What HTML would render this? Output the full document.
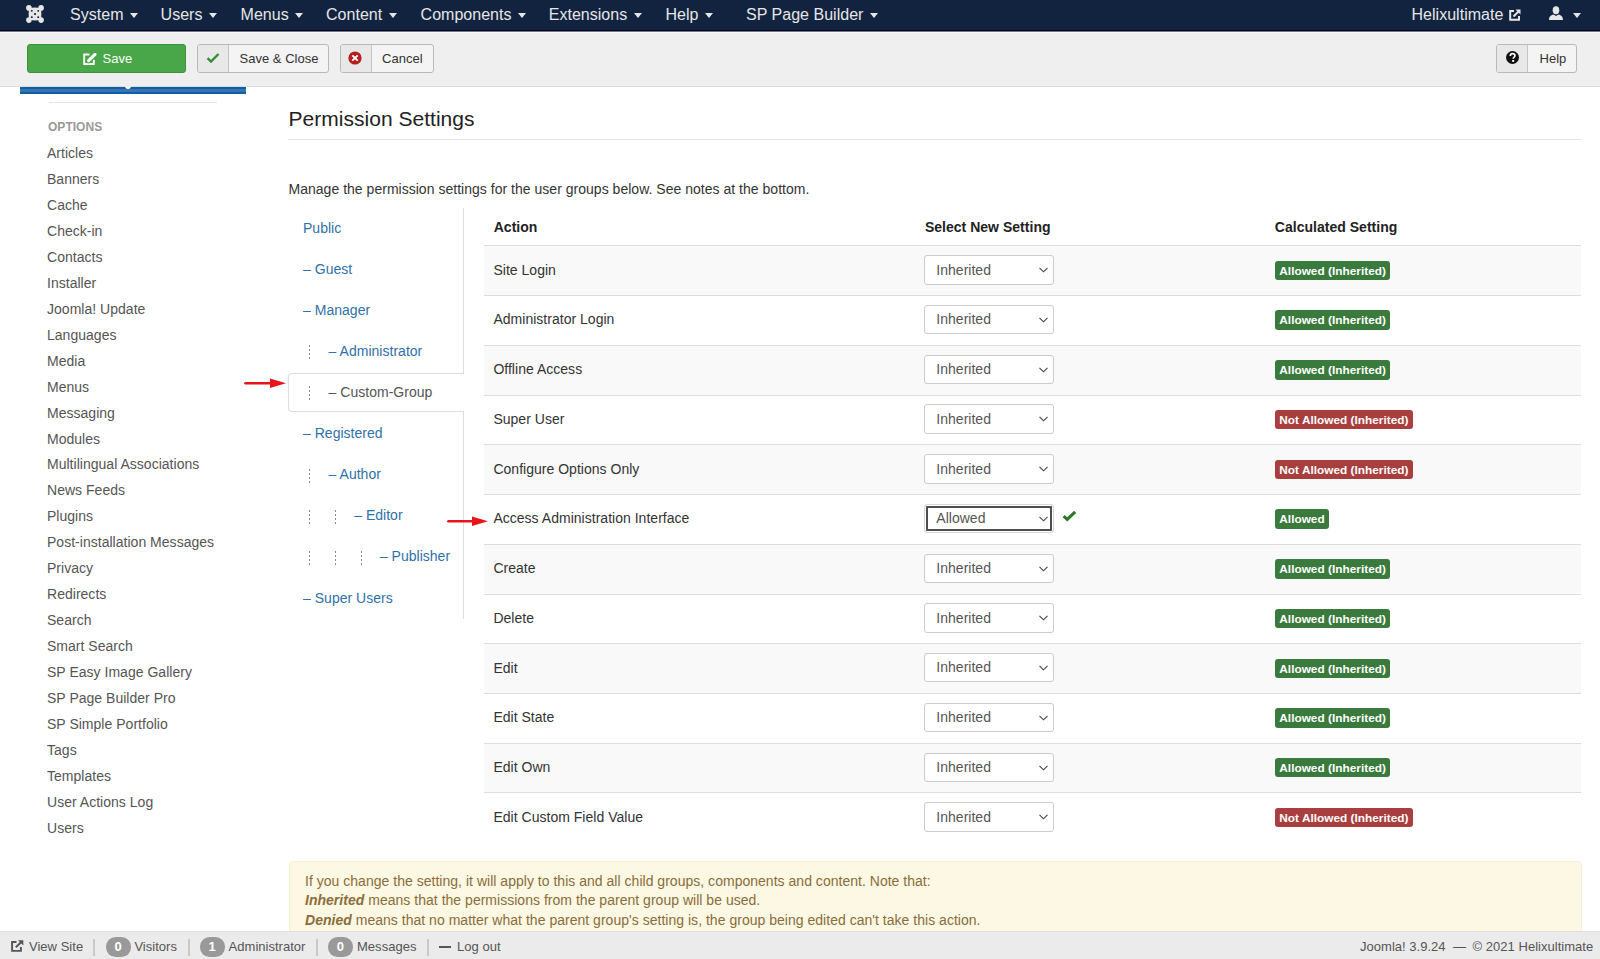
<!DOCTYPE html>
<html><head><meta charset="utf-8">
<style>
*{box-sizing:border-box}
html,body{margin:0;padding:0;width:1600px;height:959px;overflow:hidden;background:#fff;font-family:"Liberation Sans",sans-serif;color:#333;letter-spacing:0.022px}
.a{position:absolute;white-space:nowrap}
#nav{position:absolute;left:0;top:0;width:1600px;height:31px;background:#12233f;border-bottom:1px solid #00022c}
#nav .i{position:absolute;top:-0.54px;line-height:31px;font-size:16px;color:#e6e6e6}
.caret{display:inline-block;width:0;height:0;border-top:5.5px solid #e6e6e6;border-left:4.5px solid transparent;border-right:4.5px solid transparent;vertical-align:middle;margin-left:6.6px;position:relative;top:-1px}
#tb{position:absolute;left:0;top:31px;width:1600px;height:56px;background:#efefef;border-top:1px solid #787878;box-shadow:inset 0 1px 0 #fafafa;border-bottom:1px solid #dcdcdc}
.btn{position:absolute;top:44px;height:29px;border:1px solid #b9b9b9;border-radius:3px;background:#f4f4f4;font-size:13px;color:#333;overflow:hidden}
.btn .ic{position:absolute;left:0;top:0;bottom:0;background:#e8e8e8;border-right:1px solid #c4c4c4}
.btn .tx{position:absolute;top:3.8px;line-height:20px}
#side .it{position:absolute;left:47px;font-size:14px;line-height:26px;color:#555}
.tab{position:absolute;font-size:14px;line-height:20px;color:#3071a9}
.dash{position:absolute;width:1px;height:14px;background:repeating-linear-gradient(#8a8a8a 0 2px,transparent 2px 3.9px)}
.row{position:absolute;left:484px;width:1097px;height:49.73px;border-top:1px solid #ddd}
.row.s{background:#f9f9f9}
.row .an{position:absolute;left:9.4px;top:13.35px;font-size:14px;line-height:20px;color:#333;white-space:nowrap}
.sel{position:absolute;left:440.3px;top:8.9px;width:129.4px;height:29.3px;border:1px solid #ccc;border-radius:3px;background:#fff;font-size:14px;color:#555}
.sel.f{border-color:#d8d8d8;box-shadow:inset 0 0 0 1px #fff,inset 0 0 0 3px #4e4e4e}
.sel span{position:absolute;left:11px;top:3.3px;line-height:20px}
.sel svg{position:absolute;left:114px;top:11px}
.bdg{position:absolute;left:790.8px;top:14.3px;height:19.5px;border-radius:3px;font-size:11.8px;font-weight:bold;color:#fff;line-height:20.6px;padding:0 4.5px;white-space:nowrap}
.g{background:#3b7a3d}
.r{background:#a93e3e}
#foot{position:absolute;left:0;top:931px;width:1600px;height:28px;background:#ebebeb;border-top:1px solid #dedede;font-size:13px;color:#555}
#foot .a{top:5.1px;line-height:20px}
.fb{position:absolute;top:5.2px;height:19.5px;width:25px;border-radius:9.75px;background:#999;color:#fff;font-weight:bold;text-align:center;line-height:19.5px;font-size:13px}
.sep{position:absolute;top:7.25px;height:16.3px;width:1.6px;background:#c9c9c9}
</style></head><body>

<div id="nav">
  <svg class="a" style="left:26px;top:5px" width="18" height="18" viewBox="0 0 18 18">
    <path d="M3 3L9 2.6L15 3L15.4 9L15 15L9 15.4L3 15L2.6 9Z" fill="#e6e6e6"/>
    <g fill="#e6e6e6"><circle cx="2.9" cy="2.9" r="2.8"/><circle cx="15.1" cy="2.9" r="2.8"/><circle cx="2.9" cy="15.1" r="2.8"/><circle cx="15.1" cy="15.1" r="2.8"/></g>
    <g fill="#12233f"><ellipse cx="5.8" cy="5.8" rx="1" ry="0.9"/><ellipse cx="12.2" cy="5.8" rx="1" ry="0.9"/><ellipse cx="9" cy="9" rx="1.1" ry="1"/><ellipse cx="5.8" cy="12.2" rx="1" ry="0.9"/><ellipse cx="12.2" cy="12.2" rx="1" ry="0.9"/>
    <path d="M7.5 0.5Q9 1.8 10.5 0.5Z M7.5 17.5Q9 16.2 10.5 17.5Z M0.5 7.5Q1.8 9 0.5 10.5Z M17.5 7.5Q16.2 9 17.5 10.5Z"/></g>
  </svg>
  <div class="i" style="left:70px">System<span class="caret"></span></div>
  <div class="i" style="left:160.6px">Users<span class="caret"></span></div>
  <div class="i" style="left:240.6px">Menus<span class="caret"></span></div>
  <div class="i" style="left:326px">Content<span class="caret"></span></div>
  <div class="i" style="left:420.6px">Components<span class="caret"></span></div>
  <div class="i" style="left:548.75px">Extensions<span class="caret"></span></div>
  <div class="i" style="left:665.5px">Help<span class="caret"></span></div>
  <div class="i" style="left:746px">SP Page Builder<span class="caret"></span></div>
  <div class="i" style="left:1411.5px">Helixultimate</div>
  <svg class="a" style="left:1508.5px;top:8.5px" width="12" height="12" viewBox="0 0 12 12">
    <path d="M5 2H1.2V10.8H10V7" fill="none" stroke="#e6e6e6" stroke-width="2"/>
    <path d="M6.5 0.5H11.5V5.5Z" fill="#e6e6e6"/><path d="M4.5 7.5L10 2" stroke="#e6e6e6" stroke-width="2"/>
  </svg>
  <svg class="a" style="left:1548.5px;top:6px" width="14" height="14" viewBox="0 0 14 14">
    <ellipse cx="7" cy="4.2" rx="3.3" ry="4" fill="#e6e6e6"/>
    <path d="M0 14C0 10.5 2 9.3 4.5 8.6L7 10L9.5 8.6C12 9.3 14 10.5 14 14Z" fill="#e6e6e6"/>
  </svg>
  <div class="a" style="left:1573px;top:12.8px;width:0;height:0;border-top:5.5px solid #e6e6e6;border-left:4.25px solid transparent;border-right:4.25px solid transparent"></div>
</div>

<div id="tb">
</div>
<div class="btn" style="left:27px;width:159px;background:#49a749;border-color:#3a933a">
  <svg class="a" style="left:54.5px;top:7.5px" width="15" height="14" viewBox="0 0 15 14">
    <path d="M6.5 1.5H1.2V11H10.8V6.8" fill="none" stroke="#fff" stroke-width="1.9"/>
    <path d="M5.6 7.6L12 1.4" stroke="#49a749" stroke-width="5.4" stroke-linecap="round"/>
    <path d="M5.6 7.6L12 1.4" stroke="#fff" stroke-width="3" stroke-linecap="round"/>
  </svg>
  <span class="tx" style="left:74.5px;color:#fff">Save</span>
</div>
<div class="btn" style="left:196.5px;width:132.5px">
  <div class="ic" style="width:31px"></div>
  <svg class="a" style="left:8px;top:7px" width="14" height="12" viewBox="0 0 14 12">
    <path d="M1.5 6.2L5 9.5L12.5 2" fill="none" stroke="#378b37" stroke-width="2.4"/>
  </svg>
  <span class="tx" style="left:42px">Save &amp; Close</span>
</div>
<div class="btn" style="left:339.5px;width:94px">
  <div class="ic" style="width:31px"></div>
  <svg class="a" style="left:7.8px;top:6px" width="14" height="14" viewBox="0 0 14 14">
    <circle cx="7" cy="7" r="6.6" fill="#b41f1f"/>
    <path d="M4.3 4.3L9.7 9.7M9.7 4.3L4.3 9.7" stroke="#fff" stroke-width="1.9"/>
  </svg>
  <span class="tx" style="left:41.5px">Cancel</span>
</div>
<div class="btn" style="left:1496px;width:81px">
  <div class="ic" style="width:31px"></div>
  <svg class="a" style="left:8.5px;top:6.3px" width="13" height="13" viewBox="0 0 13 13">
    <circle cx="6.5" cy="6.5" r="6.5" fill="#111"/>
    <path d="M4.3 5C4.3 3.5 5.3 2.7 6.6 2.7C8 2.7 8.9 3.5 8.9 4.7C8.9 6.2 7.2 6.3 7.2 7.8" fill="none" stroke="#fff" stroke-width="1.7"/>
    <rect x="6.2" y="9" width="1.9" height="1.9" fill="#fff"/>
  </svg>
  <span class="tx" style="left:42.5px">Help</span>
</div>

<!-- sidebar -->
<div id="side">
  <div class="a" style="left:20px;top:87px;width:226px;height:6.5px;background:linear-gradient(#0d5fa6 0,#0d5fa6 1.6px,#3874ae 1.6px,#3874ae 4.8px,#0d5fa6 4.8px)"></div>
  <div class="a" style="left:125.2px;top:86px;width:5.6px;height:3.2px;background:#fff;border-radius:0 0 3px 3px"></div>
  <div class="a" style="left:49px;top:102px;width:168px;height:1px;background:#e5e5e5"></div>
  <div class="a" style="left:48px;top:118.74px;font-size:12px;line-height:16px;font-weight:bold;color:#999">OPTIONS</div>
  <div class="it" style="top:140.18px">Articles</div>
  <div class="it" style="top:166.12px">Banners</div>
  <div class="it" style="top:192.06px">Cache</div>
  <div class="it" style="top:218px">Check-in</div>
  <div class="it" style="top:243.94px">Contacts</div>
  <div class="it" style="top:269.88px">Installer</div>
  <div class="it" style="top:295.82px">Joomla! Update</div>
  <div class="it" style="top:321.76px">Languages</div>
  <div class="it" style="top:347.7px">Media</div>
  <div class="it" style="top:373.64px">Menus</div>
  <div class="it" style="top:399.58px">Messaging</div>
  <div class="it" style="top:425.52px">Modules</div>
  <div class="it" style="top:451.46px">Multilingual Associations</div>
  <div class="it" style="top:477.4px">News Feeds</div>
  <div class="it" style="top:503.34px">Plugins</div>
  <div class="it" style="top:529.28px">Post-installation Messages</div>
  <div class="it" style="top:555.22px">Privacy</div>
  <div class="it" style="top:581.16px">Redirects</div>
  <div class="it" style="top:607.1px">Search</div>
  <div class="it" style="top:633.04px">Smart Search</div>
  <div class="it" style="top:658.98px">SP Easy Image Gallery</div>
  <div class="it" style="top:684.92px">SP Page Builder Pro</div>
  <div class="it" style="top:710.86px">SP Simple Portfolio</div>
  <div class="it" style="top:736.8px">Tags</div>
  <div class="it" style="top:762.74px">Templates</div>
  <div class="it" style="top:788.68px">User Actions Log</div>
  <div class="it" style="top:814.62px">Users</div>
</div>

<!-- main -->
<div class="a" style="left:288.5px;top:106.82px;font-size:21px;line-height:24px;color:#222">Permission Settings</div>
<div class="a" style="left:288px;top:139px;width:1293px;height:1px;background:#e5e5e5"></div>
<div class="a" style="left:288.5px;top:178.65px;font-size:14px;line-height:20px;color:#333">Manage the permission settings for the user groups below. See notes at the bottom.</div>


<!-- tabs -->
<div class="a" style="left:463px;top:208.4px;width:1px;height:164.6px;background:#ddd"></div>
<div class="a" style="left:463px;top:411px;width:1px;height:208px;background:#ddd"></div>
<div class="a" style="left:288.3px;top:373px;width:176px;height:38.5px;border:1px solid #ddd;border-right:0;border-radius:4px 0 0 4px;background:#fff"></div>
<div class="tab" style="left:303.0px;top:217.65px">Public</div>
<div class="tab" style="left:303.0px;top:258.75px">&ndash; Guest</div>
<div class="tab" style="left:303.0px;top:299.85px">&ndash; Manager</div>
<div class="tab" style="left:328.6px;top:340.95px">&ndash; Administrator</div>
<div class="dash" style="left:309.3px;top:345.3px"></div>
<div class="tab" style="left:328.6px;top:382.05px;color:#555">&ndash; Custom-Group</div>
<div class="dash" style="left:309.3px;top:386.4px"></div>
<div class="tab" style="left:303.0px;top:423.15px">&ndash; Registered</div>
<div class="tab" style="left:328.6px;top:464.25px">&ndash; Author</div>
<div class="dash" style="left:309.3px;top:468.6px"></div>
<div class="tab" style="left:354.2px;top:505.35px">&ndash; Editor</div>
<div class="dash" style="left:309.3px;top:509.7px"></div>
<div class="dash" style="left:334.9px;top:509.7px"></div>
<div class="tab" style="left:379.8px;top:546.45px">&ndash; Publisher</div>
<div class="dash" style="left:309.3px;top:550.8px"></div>
<div class="dash" style="left:334.9px;top:550.8px"></div>
<div class="dash" style="left:360.5px;top:550.8px"></div>
<div class="tab" style="left:303.0px;top:587.55px">&ndash; Super Users</div>
<!-- arrows -->
<svg class="a" style="left:244px;top:376px" width="44" height="14" viewBox="0 0 44 14">
  <path d="M1.5 7.2L30 7.2" stroke="#e8141b" stroke-width="2.6" stroke-linecap="round"/>
  <path d="M26 2.5L42 7.2L26 12Z" fill="#e8141b"/>
</svg>
<svg class="a" style="left:447px;top:514px" width="44" height="14" viewBox="0 0 44 14">
  <path d="M1.5 7.2L30 7.2" stroke="#e8141b" stroke-width="2.6" stroke-linecap="round"/>
  <path d="M25 2.5L41 7.2L25 12Z" fill="#e8141b"/>
</svg>
<!-- table -->
<div class="a" style="left:493.7px;top:217.1px;font-size:14px;line-height:20px;font-weight:bold;color:#222">Action</div>
<div class="a" style="left:924.9px;top:217.1px;font-size:14px;line-height:20px;font-weight:bold;color:#222">Select New Setting</div>
<div class="a" style="left:1274.8px;top:217.1px;font-size:14px;line-height:20px;font-weight:bold;color:#222">Calculated Setting</div>
<div class="row s" style="top:245.40px"><span class="an">Site Login</span><div class="sel"><span>Inherited</span><svg width="9" height="6" viewBox="0 0 9 6"><path d="M0.5 0.8L4.5 4.8L8.5 0.8" fill="none" stroke="#444" stroke-width="1.1"/></svg></div><span class="bdg g">Allowed (Inherited)</span></div>
<div class="row" style="top:295.13px"><span class="an">Administrator Login</span><div class="sel"><span>Inherited</span><svg width="9" height="6" viewBox="0 0 9 6"><path d="M0.5 0.8L4.5 4.8L8.5 0.8" fill="none" stroke="#444" stroke-width="1.1"/></svg></div><span class="bdg g">Allowed (Inherited)</span></div>
<div class="row s" style="top:344.86px"><span class="an">Offline Access</span><div class="sel"><span>Inherited</span><svg width="9" height="6" viewBox="0 0 9 6"><path d="M0.5 0.8L4.5 4.8L8.5 0.8" fill="none" stroke="#444" stroke-width="1.1"/></svg></div><span class="bdg g">Allowed (Inherited)</span></div>
<div class="row" style="top:394.59px"><span class="an">Super User</span><div class="sel"><span>Inherited</span><svg width="9" height="6" viewBox="0 0 9 6"><path d="M0.5 0.8L4.5 4.8L8.5 0.8" fill="none" stroke="#444" stroke-width="1.1"/></svg></div><span class="bdg r">Not Allowed (Inherited)</span></div>
<div class="row s" style="top:444.32px"><span class="an">Configure Options Only</span><div class="sel"><span>Inherited</span><svg width="9" height="6" viewBox="0 0 9 6"><path d="M0.5 0.8L4.5 4.8L8.5 0.8" fill="none" stroke="#444" stroke-width="1.1"/></svg></div><span class="bdg r">Not Allowed (Inherited)</span></div>
<div class="row" style="top:494.05px"><span class="an">Access Administration Interface</span><div class="sel f"><span>Allowed</span><svg width="9" height="6" viewBox="0 0 9 6"><path d="M0.5 0.8L4.5 4.8L8.5 0.8" fill="none" stroke="#444" stroke-width="1.1"/></svg></div><svg class="a" style="left:577.5px;top:15px" width="15" height="12" viewBox="0 0 15 12"><path d="M1.6 6.2L5.2 9.4L13.2 1.8" fill="none" stroke="#2a7a2a" stroke-width="3"/></svg><span class="bdg g">Allowed</span></div>
<div class="row s" style="top:543.78px"><span class="an">Create</span><div class="sel"><span>Inherited</span><svg width="9" height="6" viewBox="0 0 9 6"><path d="M0.5 0.8L4.5 4.8L8.5 0.8" fill="none" stroke="#444" stroke-width="1.1"/></svg></div><span class="bdg g">Allowed (Inherited)</span></div>
<div class="row" style="top:593.51px"><span class="an">Delete</span><div class="sel"><span>Inherited</span><svg width="9" height="6" viewBox="0 0 9 6"><path d="M0.5 0.8L4.5 4.8L8.5 0.8" fill="none" stroke="#444" stroke-width="1.1"/></svg></div><span class="bdg g">Allowed (Inherited)</span></div>
<div class="row s" style="top:643.24px"><span class="an">Edit</span><div class="sel"><span>Inherited</span><svg width="9" height="6" viewBox="0 0 9 6"><path d="M0.5 0.8L4.5 4.8L8.5 0.8" fill="none" stroke="#444" stroke-width="1.1"/></svg></div><span class="bdg g">Allowed (Inherited)</span></div>
<div class="row" style="top:692.97px"><span class="an">Edit State</span><div class="sel"><span>Inherited</span><svg width="9" height="6" viewBox="0 0 9 6"><path d="M0.5 0.8L4.5 4.8L8.5 0.8" fill="none" stroke="#444" stroke-width="1.1"/></svg></div><span class="bdg g">Allowed (Inherited)</span></div>
<div class="row s" style="top:742.70px"><span class="an">Edit Own</span><div class="sel"><span>Inherited</span><svg width="9" height="6" viewBox="0 0 9 6"><path d="M0.5 0.8L4.5 4.8L8.5 0.8" fill="none" stroke="#444" stroke-width="1.1"/></svg></div><span class="bdg g">Allowed (Inherited)</span></div>
<div class="row" style="top:792.43px"><span class="an">Edit Custom Field Value</span><div class="sel"><span>Inherited</span><svg width="9" height="6" viewBox="0 0 9 6"><path d="M0.5 0.8L4.5 4.8L8.5 0.8" fill="none" stroke="#444" stroke-width="1.1"/></svg></div><span class="bdg r">Not Allowed (Inherited)</span></div>
<!-- alert -->
<div class="a" style="left:288.5px;top:861.3px;width:1293px;height:120px;background:#fcf8e3;border:1px solid #fbeed5;border-radius:4px;font-size:14px;color:#8a6d3b">
  <div class="a" style="left:15.5px;top:9.8px;line-height:19.2px">If you change the setting, it will apply to this and all child groups, components and content. Note that:<br><b><i>Inherited</i></b> means that the permissions from the parent group will be used.<br><b><i>Denied</i></b> means that no matter what the parent group's setting is, the group being edited can't take this action.</div>
</div>
<!-- footer -->
<div id="foot">
  <svg class="a" style="left:10.8px;top:7.6px" width="13" height="12" viewBox="0 0 13 12">
    <path d="M5.5 2H1.1V10.9H9.9V7" fill="none" stroke="#555" stroke-width="1.9"/>
    <path d="M7 0.3H12.3V5.6Z" fill="#555"/><path d="M4.8 7.3L10.6 1.8" stroke="#555" stroke-width="1.9"/>
  </svg>
  <span class="a" style="left:29px">View Site</span>
  <div class="sep" style="left:93.4px"></div>
  <div class="fb" style="left:105.6px">0</div>
  <span class="a" style="left:134.4px">Visitors</span>
  <div class="sep" style="left:188px"></div>
  <div class="fb" style="left:199.6px">1</div>
  <span class="a" style="left:228.6px">Administrator</span>
  <div class="sep" style="left:316px"></div>
  <div class="fb" style="left:328px">0</div>
  <span class="a" style="left:357px">Messages</span>
  <div class="sep" style="left:427px"></div>
  <div class="a" style="left:438.75px;top:13.5px;width:12.5px;height:2.6px;background:#555"></div>
  <span class="a" style="left:457px">Log out</span>
  <span class="a" style="left:1360px">Joomla! 3.9.24</span>
  <span class="a" style="left:1453px">&mdash;</span>
  <span class="a" style="left:1472.6px">&copy; 2021 Helixultimate</span>
</div>

</body></html>
